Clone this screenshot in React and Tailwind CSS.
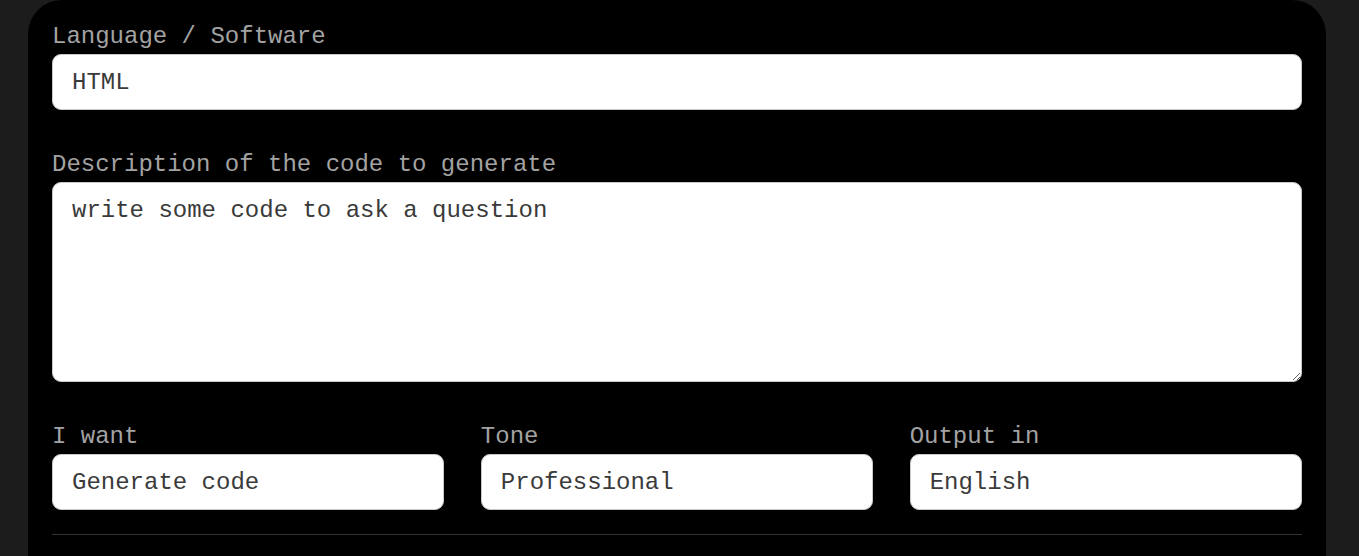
const mono = { fontFamily: '"Liberation Mono", "Courier New", monospace' }

function Label({ children }) {
  return <label className="mb-[3px] block text-[24px] leading-[28px] text-[#a3a3a3]">{children}</label>
}

function Field({ label, value }) {
  return (
    <div className="flex flex-col">
      <Label>{label}</Label>
      <input
        readOnly
        value={value}
        className="h-[56px] w-full rounded-[9px] border border-[#c8c8c8] bg-white px-[19px] text-[24px] text-[#3a3a3a] outline-none"
        style={mono}
      />
    </div>
  )
}

export default function App() {
  return (
    <div className="min-h-[556px] bg-[#1c1c1c] px-[28px]" style={mono}>
      <div className="w-[1298px] rounded-t-[34px] bg-black px-[24px] pt-[23px] pb-[24px]">
        <Field label="Language / Software" value="HTML" />

        <div className="mt-[41px] flex flex-col">
          <Label>Description of the code to generate</Label>
          <textarea
            readOnly
            value="write some code to ask a question"
            className="h-[200px] w-full rounded-[9px] border border-[#c8c8c8] bg-white px-[19px] py-[14px] text-[24px] leading-[28px] text-[#3a3a3a] outline-none"
            style={mono}
          />
        </div>

        <div className="mt-[41px] grid grid-cols-3 gap-[36.5px]">
          <Field label="I want" value="Generate code" />
          <Field label="Tone" value="Professional" />
          <Field label="Output in" value="English" />
        </div>

        <div className="mt-[24px] h-px bg-[#333]" />
      </div>
    </div>
  )
}
